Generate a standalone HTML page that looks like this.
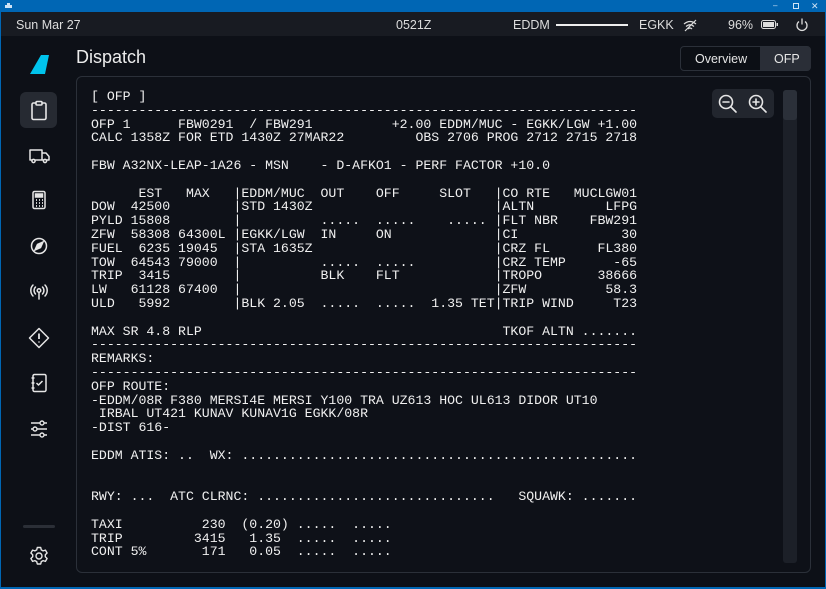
<!DOCTYPE html>
<html><head><meta charset="utf-8"><style>
*{margin:0;padding:0;box-sizing:border-box}
body{width:826px;height:589px;background:#0066b4;overflow:hidden;position:relative;font-family:"Liberation Sans",sans-serif;color:#e6e6e6}
#win{position:absolute;left:1px;top:12px;width:824px;height:575px;background:#0d1017}
#status{position:absolute;left:0;top:0;width:824px;height:24px;background:#181b22;font-size:12.5px;color:#ddd}
#status span{position:absolute;top:5px}
.t{position:absolute}
#panel{position:absolute;left:75px;top:64px;width:735px;height:497px;border:1px solid #2b3039;border-radius:6px;background:#0e1118}
pre{position:absolute;left:14px;top:13px;font-family:"Liberation Mono",monospace;font-size:13.2px;line-height:13.8px;color:#f0f0f0;white-space:pre}
.ic{position:absolute;left:22px;width:32px;height:32px}
</style></head><body>
<svg class="t" style="left:4px;top:3px" width="9" height="6"><rect x="1" y="2" width="7" height="3" fill="#cfe3f5"/><rect x="3" y="0" width="3" height="2" fill="#cfe3f5"/></svg>
<div class="t" style="left:773px;top:0;font-size:8px;color:#cfe3f5;line-height:12px">–</div>
<div class="t" style="left:793px;top:3px;width:6px;height:6px;border:1px solid #cfe3f5"></div>
<div class="t" style="left:811px;top:0;font-size:9px;color:#cfe3f5;line-height:12px">✕</div>
<div id="win">
 <div id="status">
  <span style="left:15px;top:6px">Sun Mar 27</span>
  <span style="left:395px;top:6px">0521Z</span>
  <span style="left:512px;top:6px">EDDM</span>
  <div class="t" style="left:555px;top:12px;width:72px;height:2px;background:#eee"></div>
  <span style="left:638px;top:6px">EGKK</span>
  <svg class="t" style="left:681px;top:5px" width="16" height="16" viewBox="0 0 16 16" fill="none" stroke="#ddd" stroke-width="1.2"><path d="M2 7q6-5 12 0M4 9.5q4-3.5 8 0M6 12q2-2 4 0M3 14L14 3"/></svg>
  <span style="left:727px;top:6px">96%</span>
  <svg class="t" style="left:760px;top:7px" width="18" height="11"><rect x="0.5" y="1.5" width="14" height="8" rx="2" fill="none" stroke="#ddd"/><rect x="2" y="3" width="11" height="5" fill="#ddd"/><rect x="15.5" y="4" width="1.5" height="3" fill="#ddd"/></svg>
  <svg class="t" style="left:794px;top:5px" width="14" height="15" fill="none" stroke="#ddd" stroke-width="1.3"><path d="M4 4.5a5 5 0 1 0 6 0M7 1.5v6"/></svg>
 </div>
 <svg class="t" style="left:28px;top:43px" width="22" height="22"><path d="M12 0h8l-4 19H1z" fill="#00c3ec"/></svg>
 <div class="t" style="left:75px;top:35px;font-size:18px;font-weight:500;color:#ececec">Dispatch</div>
 <div class="t" style="left:679px;top:34px;width:131px;height:25px;border:1px solid #2b3039;border-radius:4px;background:#0c0f15;font-size:12.5px">
  <span class="t" style="left:14px;top:5px">Overview</span>
  <div class="t" style="left:79px;top:0;width:51px;height:23px;background:#2a2e37;border-radius:0 3px 3px 0"><span class="t" style="left:14px;top:5px">OFP</span></div>
 </div>
 <div class="t" style="left:19px;top:80px;width:37px;height:36px;background:#262a32;border-radius:6px"></div>
 <svg class="ic" style="top:82px" viewBox="0 0 32 32" fill="none" stroke="#e6e6e6" stroke-width="1.6" stroke-linejoin="round"><path d="M13 9h-2.5a1.5 1.5 0 0 0-1.5 1.5V24a1.5 1.5 0 0 0 1.5 1.5h11A1.5 1.5 0 0 0 23 24V10.5A1.5 1.5 0 0 0 21.5 9H19"/><rect x="13" y="7.5" width="6" height="3.5" rx="1"/></svg>
 <svg class="ic" style="top:127px" viewBox="0 0 32 32" fill="none" stroke="#e6e6e6" stroke-width="1.5" stroke-linejoin="round"><path d="M7 11h12v10H7zM19 14h4l3 3.5V21h-7z"/><circle cx="10.5" cy="22" r="1.6" fill="#0d1017"/><circle cx="22" cy="22" r="1.6" fill="#0d1017"/></svg>
 <svg class="ic" style="top:172px" viewBox="0 0 32 32" fill="none" stroke="#e6e6e6" stroke-width="1.5"><rect x="10" y="7.5" width="12" height="17" rx="1.5"/><rect x="12.5" y="10" width="7" height="3" fill="#e6e6e6"/><path d="M13 16h1M16 16h1M19 16h1M13 19h1M16 19h1M19 19h1M13 22h1M16 22h1M19 22h1" stroke-width="1.8"/></svg>
 <svg class="ic" style="top:218px" viewBox="0 0 32 32" fill="none" stroke="#e6e6e6" stroke-width="1.5"><circle cx="16" cy="16" r="7.5"/><path d="M20 12l-2.5 5.5L12 20l2.5-5.5z" fill="#e6e6e6"/></svg>
 <svg class="ic" style="top:264px" viewBox="0 0 32 32" fill="none" stroke="#e6e6e6" stroke-width="1.5" stroke-linecap="round"><circle cx="16" cy="14.5" r="1.8"/><path d="M16 16.5V23M12.5 11a5 5 0 0 0 0 7M19.5 11a5 5 0 0 1 0 7M10 9a8 8 0 0 0 0 11M22 9a8 8 0 0 1 0 11"/></svg>
 <svg class="ic" style="top:310px" viewBox="0 0 32 32" fill="none" stroke="#e6e6e6" stroke-width="1.5" stroke-linejoin="round"><path d="M16 6.5l9.5 9.5-9.5 9.5-9.5-9.5z"/><path d="M16 11.5v5.5M16 19.5v1" stroke-width="1.8"/></svg>
 <svg class="ic" style="top:355px" viewBox="0 0 32 32" fill="none" stroke="#e6e6e6" stroke-width="1.5" stroke-linejoin="round"><rect x="10" y="7.5" width="13" height="17" rx="1.5"/><path d="M8.5 11h3M8.5 16h3M8.5 21h3M13.5 16l2 2 4-4"/></svg>
 <svg class="ic" style="top:401px" viewBox="0 0 32 32" fill="none" stroke="#e6e6e6" stroke-width="1.4"><path d="M8 10h9M21 10h3M8 16h2M14 16h10M8 22h9M21 22h3"/><circle cx="19" cy="10" r="2"/><circle cx="12" cy="16" r="2"/><circle cx="19" cy="22" r="2"/></svg>
 <div class="t" style="left:22px;top:513px;width:32px;height:3px;border-radius:2px;background:#2b2f37"></div>
 <svg class="ic" style="top:528px" viewBox="0 0 32 32" fill="none" stroke="#e6e6e6" stroke-width="1.4" stroke-linejoin="round"><path d="M14.3 7.5h3.4l.6 2.4 1.8 1 2.3-.8 1.7 2.9-1.8 1.7v2.1l1.8 1.7-1.7 2.9-2.3-.8-1.8 1-.6 2.4h-3.4l-.6-2.4-1.8-1-2.3.8-1.7-2.9 1.8-1.7v-2.1l-1.8-1.7 1.7-2.9 2.3.8 1.8-1z"/><circle cx="16" cy="16" r="3"/></svg>
 <div id="panel">
<pre>[ OFP ]
---------------------------------------------------------------------
OFP 1      FBW0291  / FBW291          +2.00 EDDM/MUC - EGKK/LGW +1.00
CALC 1358Z FOR ETD 1430Z 27MAR22         OBS 2706 PROG 2712 2715 2718

FBW A32NX-LEAP-1A26 - MSN    - D-AFKO1 - PERF FACTOR +10.0

      EST   MAX   |EDDM/MUC  OUT    OFF     SLOT   |CO RTE   MUCLGW01
DOW  42500        |STD 1430Z                       |ALTN         LFPG
PYLD 15808        |          .....  .....    ..... |FLT NBR    FBW291
ZFW  58308 64300L |EGKK/LGW  IN     ON             |CI             30
FUEL  6235 19045  |STA 1635Z                       |CRZ FL      FL380
TOW  64543 79000  |          .....  .....          |CRZ TEMP      -65
TRIP  3415        |          BLK    FLT            |TROPO       38666
LW   61128 67400  |                                |ZFW          58.3
ULD   5992        |BLK 2.05  .....  .....  1.35 TET|TRIP WIND     T23

MAX SR 4.8 RLP                                      TKOF ALTN .......
---------------------------------------------------------------------
REMARKS:
---------------------------------------------------------------------
OFP ROUTE:
-EDDM/08R F380 MERSI4E MERSI Y100 TRA UZ613 HOC UL613 DIDOR UT10
 IRBAL UT421 KUNAV KUNAV1G EGKK/08R
-DIST 616-

EDDM ATIS: ..  WX: ..................................................


RWY: ...  ATC CLRNC: ..............................   SQUAWK: .......

TAXI          230  (0.20) .....  .....
TRIP         3415   1.35  .....  .....
CONT 5%       171   0.05  .....  .....</pre>
  <div class="t" style="left:635px;top:12px;width:62px;height:29px;background:#22262e;border-radius:5px"></div>
  <svg class="t" style="left:640px;top:16px" width="22" height="22" fill="none" stroke="#e6e6e6" stroke-width="1.6" stroke-linecap="round"><circle cx="9" cy="9" r="6.5"/><path d="M14 14l5 5M6 9h6"/></svg>
  <svg class="t" style="left:670px;top:16px" width="22" height="22" fill="none" stroke="#e6e6e6" stroke-width="1.6" stroke-linecap="round"><circle cx="9" cy="9" r="6.5"/><path d="M14 14l5 5M6 9h6M9 6v6"/></svg>
  <div class="t" style="left:706px;top:13px;width:14px;height:473px;background:#1c2028;border-radius:3px"></div>
  <div class="t" style="left:706px;top:13px;width:14px;height:30px;background:#2b3039;border-radius:3px"></div>
 </div>
</div>
</body></html>
